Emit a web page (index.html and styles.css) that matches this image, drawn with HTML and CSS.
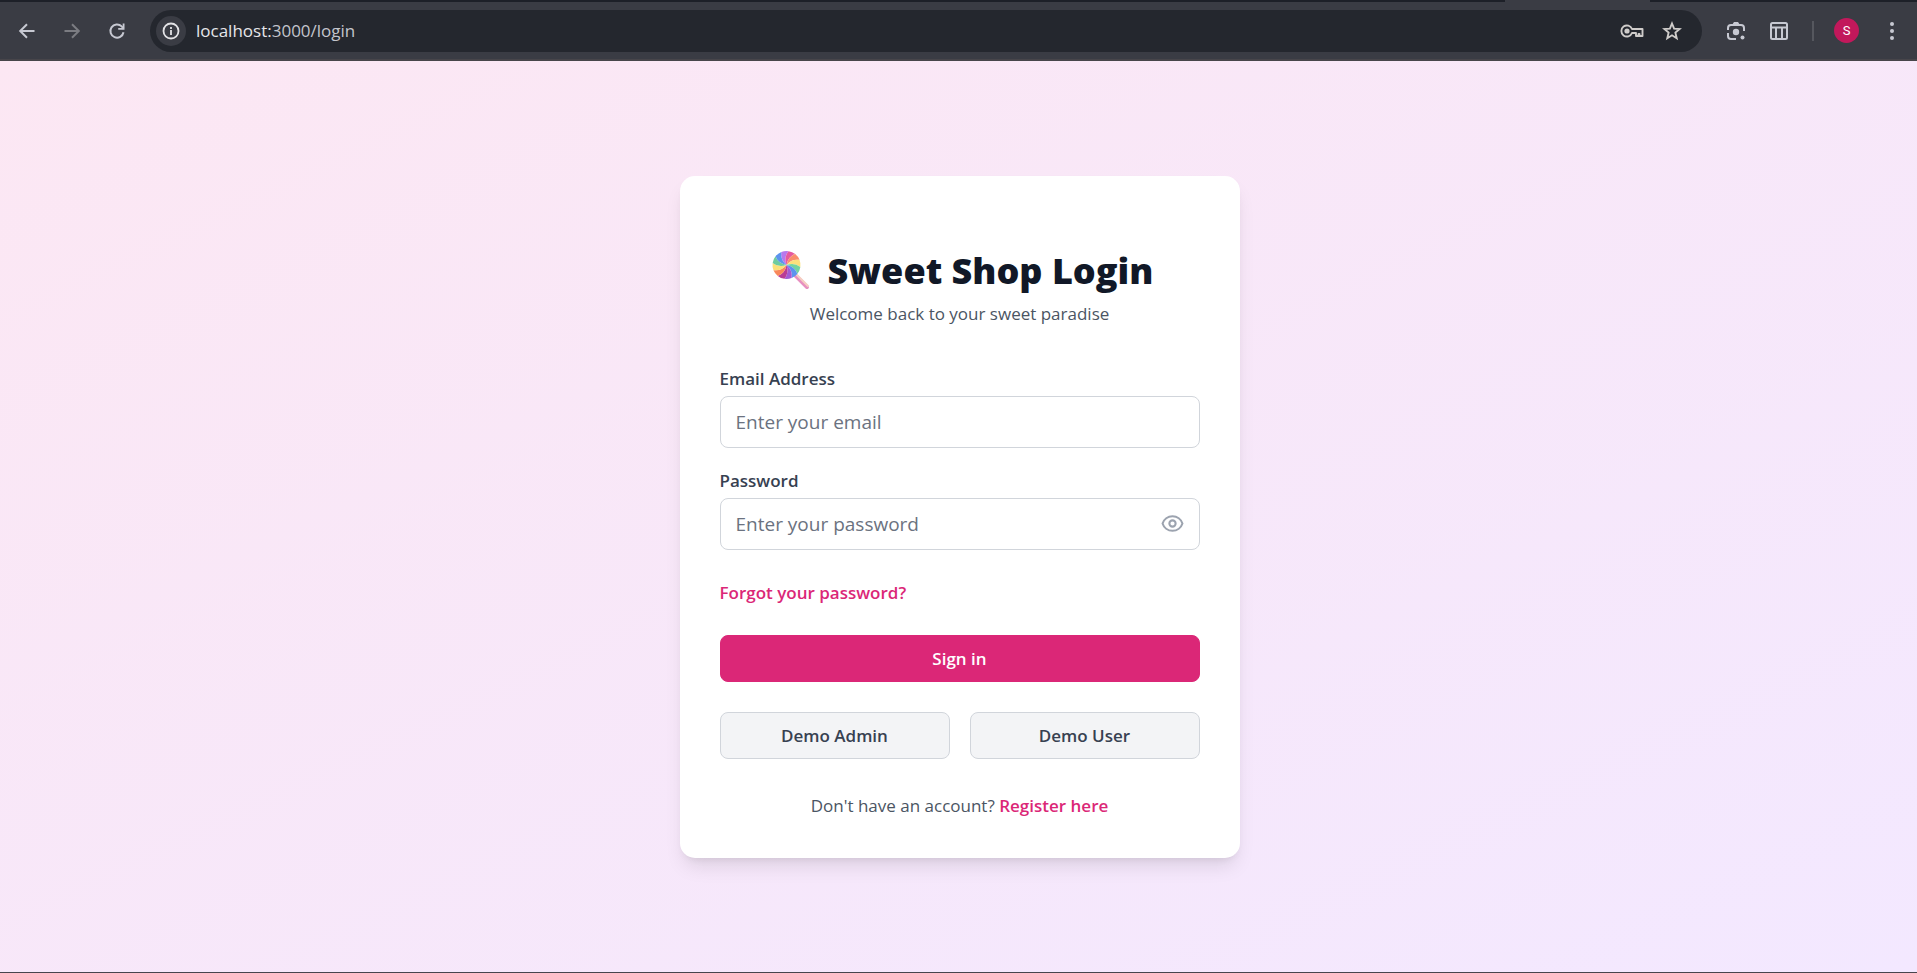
FILE: index.html
```html
<!DOCTYPE html>
<html lang="en">
<head>
<meta charset="utf-8">
<title>Sweet Shop Login</title>
<link rel="stylesheet" href="styles.css">
</head>
<body>
<header class="browser">
  <div class="tabstrip"><span class="tab-edge"></span></div>
  <div class="toolbar">
    <nav class="nav-buttons" aria-label="Browser navigation">
      <button class="tool" type="button" aria-label="Back"><svg width="20" height="20" viewBox="0 0 20 20"><path d="M17.500 10H4M10 3.200 3.200 10l6.800 6.800" fill="none" stroke="#c7c9d2" stroke-width="2"/></svg></button>
      <button class="tool" type="button" aria-label="Forward"><svg width="20" height="20" viewBox="0 0 20 20"><path d="M2.500 10H16M10 3.200l6.800 6.800-6.800 6.800" fill="none" stroke="#7b7c82" stroke-width="2"/></svg></button>
      <button class="tool" type="button" aria-label="Reload"><svg width="20" height="20" viewBox="0 0 20 20"><path d="M16.500 11.200A6.600 6.600 0 1 1 14.700 5.400L16.500 7.500" fill="none" stroke="#c7c9d2" stroke-width="2"/><path d="M17.500 2.500v6.300h-6.300V7h4.500V2.500z" fill="#c7c9d2"/></svg></button>
    </nav>
    <div class="omnibox">
      <button class="site-info" type="button" aria-label="Site information"><svg width="18" height="18" viewBox="0 0 18 18"><circle cx="9" cy="9" r="7.500" fill="none" stroke="#e3e3e6" stroke-width="1.800"/><path d="M9 8v5M9 5v2" stroke="#e3e3e6" stroke-width="1.800"/></svg></button>
      <p class="url">localhost:<span class="url-rest">3000/login</span></p>
      <button class="tool" type="button" aria-label="Passwords"><svg width="24" height="16" viewBox="0 0 24 16"><path d="M12 6A5.500 5.500 0 1 0 12 10H16V13h2.500v-2h1v2H22.500V6z" fill="none" stroke="#cfccca" stroke-width="1.900" stroke-linejoin="round"/><circle cx="7" cy="8" r="2.600" fill="#cfccca"/></svg></button>
      <button class="tool" type="button" aria-label="Bookmark"><svg width="20" height="20" viewBox="0 0 20 20"><path d="M10 2.500l2.100 5.100 5.500.4-4.200 3.600 1.300 5.600L10 14.300l-4.700 2.900 1.300-5.600L2.400 8l5.500-.4z" fill="none" stroke="#cfccca" stroke-width="1.900"/></svg></button>
    </div>
    <div class="actions">
      <button class="tool" type="button" aria-label="Search with Lens"><svg width="20" height="20" viewBox="0 0 20 20"><path d="M2 9V7a3 3 0 0 1 3-3h10a3 3 0 0 1 3 3v3M2 12v3a3 3 0 0 0 3 3h5" fill="none" stroke="#c7c9d2" stroke-width="2"/><path d="M8 1h4l2 3H6z" fill="#c7c9d2"/><circle cx="10" cy="11" r="3.200" fill="#c7c9d2"/><circle cx="16.500" cy="16.500" r="2" fill="#c7c9d2"/></svg></button>
      <button class="tool" type="button" aria-label="Side panel"><svg width="20" height="20" viewBox="0 0 20 20" fill="none" stroke="#c7c9d2" stroke-width="2"><rect x="2" y="2" width="16" height="16" rx="1.500"/><path d="M2 6.500h16M7 6.500V18M13 6.500V18"/></svg></button>
      <span class="divider"></span>
      <button class="avatar" type="button" aria-label="Profile">S</button>
      <button class="tool" type="button" aria-label="Menu"><svg width="20" height="20" viewBox="0 0 20 20" fill="#c7c9d2"><circle cx="10" cy="3" r="2"/><circle cx="10" cy="10" r="2"/><circle cx="10" cy="17" r="2"/></svg></button>
    </div>
  </div>
</header>
<main class="page">
  <section class="card">
    <div class="intro">
      <h1 class="title"><svg class="lollipop" width="48" height="40" viewBox="-5 0 48 40" aria-hidden="true"><path d="M24 25l12 12" stroke="#e78fc0" stroke-width="4" stroke-linecap="round"/><path d="M25 24l12 12" stroke="#f6cfc2" stroke-width="2" stroke-linecap="round"/><g id="candy"></g></svg>Sweet Shop Login</h1>
      <p class="subtitle">Welcome back to your sweet paradise</p>
    </div>
    <form class="form">
      <div class="field">
        <label for="email">Email Address</label>
        <input class="input" id="email" type="email" placeholder="Enter your email">
      </div>
      <div class="field">
        <label for="password">Password</label>
        <div class="password">
          <input class="input" id="password" type="password" placeholder="Enter your password">
          <button class="reveal" type="button" aria-label="Show password"><svg width="25" height="25" viewBox="0 0 24 24" fill="none" stroke="#9ca3af" stroke-width="2" stroke-linecap="round" stroke-linejoin="round"><path d="M15 12a3 3 0 1 1-6 0 3 3 0 0 1 6 0z"/><path d="M2.458 12C3.732 7.943 7.523 5 12 5s8.268 2.943 9.542 7c-1.274 4.057-5.064 7-9.542 7S3.732 16.057 2.458 12z"/></svg></button>
        </div>
      </div>
      <a class="link forgot" href="#">Forgot your password?</a>
      <button class="button primary" type="submit">Sign in</button>
      <div class="demo">
        <button class="button" type="button">Demo Admin</button>
        <button class="button" type="button">Demo User</button>
      </div>
      <p class="register">Don't have an account? <a class="link" href="#">Register here</a></p>
    </form>
  </section>
</main>
<script src="candy.js"></script>
</body>
</html>
```
FILE: candy.js
```js
// Draws the swirled wedges of the lollipop around its centre.
const colors = ['#b878ee', '#e5599f', '#f98e6c', '#fde07c', '#74d3a0', '#5c93ee',
                '#a25bd6', '#b93c96', '#f9885b', '#fbe07a', '#6fcb9f', '#5c93ee'];
const cx = 15.500, cy = 15, r = 14;
const point = (radius, angle) => `${cx + radius * Math.cos(angle)} ${cy + radius * Math.sin(angle)}`;
const candy = document.getElementById('candy');
colors.forEach((color, i) => {
  const a = -Math.PI * 0.62 + i * Math.PI / 6;
  const b = a + Math.PI / 6;
  const path = document.createElementNS('http://www.w3.org/2000/svg', 'path');
  path.setAttribute('d', `M${cx} ${cy}Q${point(r * 0.6, a - 0.5)} ${point(r, a)}A${r} ${r} 0 0 1 ${point(r, b)}Q${point(r * 0.6, b - 0.5)} ${cx} ${cy}Z`);
  path.setAttribute('fill', color);
  candy.appendChild(path);
});
```
FILE: styles.css
```css
* { box-sizing: border-box; }

body {
  margin: 0;
  min-height: 100vh;
  display: flex;
  flex-direction: column;
  border-bottom: 1px solid #47454d;
  font-family: "Open Sans", "Noto Sans", sans-serif;
  font-size: 17px;
  line-height: 25px;
  color: #374151;
}

h1, p { margin: 0; }

button, input { font: inherit; }

button { cursor: pointer; }

.browser { background: #3a3c44; border-bottom: 2px solid #47454a; }

.tabstrip { height: 2px; padding-right: 267px; background: #1d2028; }

.tab-edge { display: block; width: 145px; height: 2px; margin-left: auto; background: #3a3c44; }

.toolbar { display: flex; align-items: center; height: 57px; padding: 0 15px 0 17px; }

.nav-buttons { display: flex; gap: 25px; }

.tool { display: flex; padding: 0; border: 0; background: none; }

.omnibox {
  flex: 1;
  display: flex;
  align-items: center;
  gap: 18px;
  height: 42px;
  margin: 0 24px 0 23px;
  padding: 0 20px 0 6px;
  border-radius: 21px;
  background: #24272e;
}

.site-info {
  display: grid;
  place-items: center;
  width: 30px;
  height: 30px;
  padding: 0;
  border: 0;
  border-radius: 50%;
  background: #3a3c44;
}

.url { flex: 1; margin-left: -8px; color: #e6e6ea; }

.url-rest { color: #c3c5cc; }

.actions { display: flex; align-items: center; gap: 23px; }

.divider { width: 2px; height: 20px; margin-right: -3px; background: #55575e; }

.avatar {
  width: 25px;
  height: 25px;
  padding: 0;
  border: 0;
  border-radius: 50%;
  background: #c2185b;
  color: #fff;
  font-family: Roboto, sans-serif;
  font-size: 13px;
}

.page {
  flex: 1;
  display: flex;
  align-items: center;
  justify-content: center;
  padding: 20px 18px 20px 20px;
  background: linear-gradient(to bottom right, #fce7f3, #f3e8ff);
}

.card {
  width: 100%;
  max-width: 560px;
  padding: 40px;
  border-radius: 15px;
  background: #fff;
  box-shadow: 0 12px 19px -4px rgba(0, 0, 0, 0.1), 0 5px 8px -5px rgba(0, 0, 0, 0.1);
}

.intro { padding: 32px 0 40px; text-align: center; }

.title {
  display: flex;
  align-items: center;
  justify-content: center;
  gap: 14px;
  margin-bottom: 8px;
  color: #111827;
  font-size: 36px;
  font-weight: 800;
  line-height: 45px;
}

.subtitle, .register { color: #4b5563; }

.form { display: flex; flex-direction: column; gap: 30px; }

.field { display: flex; flex-direction: column; gap: 5px; }

.field + .field { margin-top: -10px; }

label { font-weight: 600; }

.input {
  width: 100%;
  height: 52px;
  padding: 0 15px;
  border: 1px solid #d1d5db;
  border-radius: 8px;
  background: #fff;
  color: #111827;
  font-size: 19px;
}

.input::placeholder { color: #6b7280; opacity: 1; }

.password { position: relative; }

.reveal {
  position: absolute;
  inset: 0 15px 0 auto;
  display: flex;
  align-items: center;
  padding: 0;
  border: 0;
  background: none;
}

.link { color: #db2777; font-weight: 600; text-decoration: none; }

.forgot { align-self: flex-start; }

.button {
  height: 47px;
  border: 1px solid #d1d5db;
  border-radius: 8px;
  background: #f3f4f6;
  color: #374151;
  font-weight: 600;
}

.primary { border-color: #db2777; background: #db2777; color: #fff; }

.demo { display: grid; grid-template-columns: 1fr 1fr; gap: 20px; }

.register { padding-top: 4px; text-align: center; }
```
